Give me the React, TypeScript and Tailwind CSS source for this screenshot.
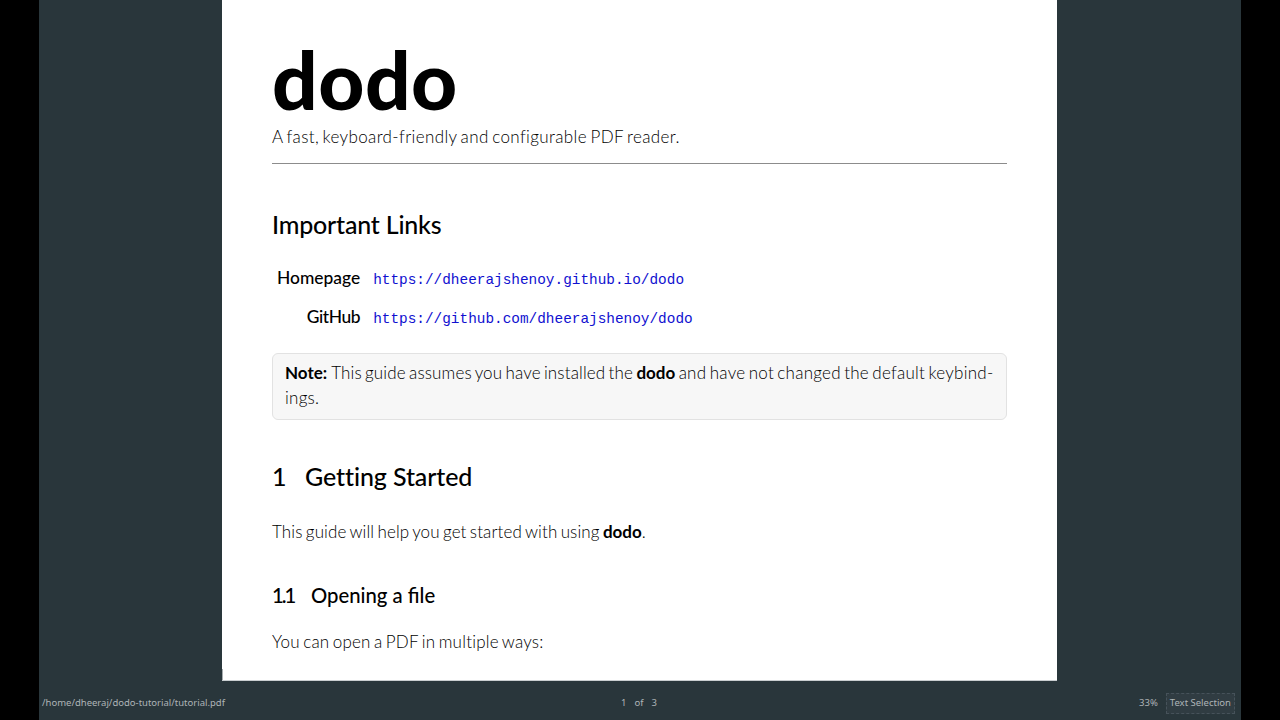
const sans = "font-['Lato','Noto_Sans',sans-serif]";
const linkCell = "p-0 pl-[13px] pt-[4px] font-['Liberation_Mono',monospace] text-[14.4px] text-[#1010d0]";

function Page() {
  return (
    <div className={`relative h-[681px] w-[835px] shrink-0 overflow-hidden border-b border-[#c9ced0] bg-white px-[50px] text-black ${sans}`}>
      <div className="absolute bottom-0 left-0 h-[11px] w-px bg-[#a5abad]" />
      <h1 className="mt-[34px] h-[90px] text-[80px] leading-[90px] font-black tracking-[0.5px]">dodo</h1>
      <p className="mt-[1px] text-[17px] leading-[24px] font-light tracking-[0.38px] [word-spacing:-1.5px]">
        A fast, keyboard-friendly and configurable PDF reader.
      </p>
      <hr className="mt-[14px] border-0 border-t border-[#8c8c8c]" />

      <h2 className="mt-[43px] text-[25px] leading-[34px] font-medium tracking-[-0.2px]">Important Links</h2>

      <table className="mt-[18px] ml-[5px] border-collapse">
        <tbody>
          <tr className="h-[39px]">
            <td className="w-[83px] p-0 text-right text-[17.4px] font-medium">Homepage</td>
            <td className={linkCell}>https://dheerajshenoy.github.io/dodo</td>
          </tr>
          <tr className="h-[39px]">
            <td className="p-0 text-right text-[17.4px] font-medium tracking-[-0.4px]">GitHub</td>
            <td className={linkCell}>https://github.com/dheerajshenoy/dodo</td>
          </tr>
        </tbody>
      </table>

      <div className="mt-[16px] h-[67px] rounded-[6px] border border-[#e2e2e2] bg-[#f7f7f7] pl-[12px] pt-[6px] text-[17px] leading-[25px] font-light tracking-[0.25px] [word-spacing:-1.5px]">
        <b className="font-bold tracking-normal">Note:</b>
        <span className="ml-[4px] tracking-[0.14px]">This guide assumes you have installed the</span>{" "}
        <b className="font-bold tracking-normal">dodo</b> and have not changed the default keybind-
        <br />
        ings.
      </div>

      <h2 className="mt-[39px] flex text-[25px] leading-[34px] font-medium tracking-[-0.1px]">
        <span className="w-[33px]">1</span>
        <span>Getting Started</span>
      </h2>
      <p className="mt-[27px] text-[17px] leading-[24px] font-light tracking-[0.13px] [word-spacing:-1.5px]">
        This guide will help you get started with using <b className="font-bold tracking-normal">dodo</b>.
      </p>
      <h3 className="mt-[37px] flex text-[20.3px] leading-[28px] font-medium">
        <span className="w-[39px] tracking-[-2px]">1.1</span>
        <span>Opening a file</span>
      </h3>
      <p className="mt-[21px] text-[17px] leading-[24px] font-light tracking-[0.22px] [word-spacing:-1.5px]">
        You can open a PDF in multiple ways:
      </p>
    </div>
  );
}

function StatusBar() {
  return (
    <div className="grid h-[39px] grid-cols-3 items-center pl-[3px] pr-[6px] pt-[6px] font-['Noto_Sans',sans-serif] text-[9.5px] text-[#aeb4b7]">
      <span>/home/dheeraj/dodo-tutorial/tutorial.pdf</span>
      <span className="flex justify-center gap-[8px] pl-[1px]">
        <span>1</span>
        <span>of</span>
        <span>3</span>
      </span>
      <span className="flex items-center justify-end gap-[8px]">
        <span>33%</span>
        <span className="flex h-[21px] items-center border border-dashed border-[#46525a] bg-[#303c42] px-[3px]">
          Text Selection
        </span>
      </span>
    </div>
  );
}

export default function App() {
  return (
    <div className="flex h-[720px] w-[1280px] overflow-hidden bg-black">
      <div className="mx-[39px] flex w-[1202px] flex-col bg-[#29363b]">
        <div className="flex justify-center pr-[1px]">
          <Page />
        </div>
        <StatusBar />
      </div>
    </div>
  );
}
